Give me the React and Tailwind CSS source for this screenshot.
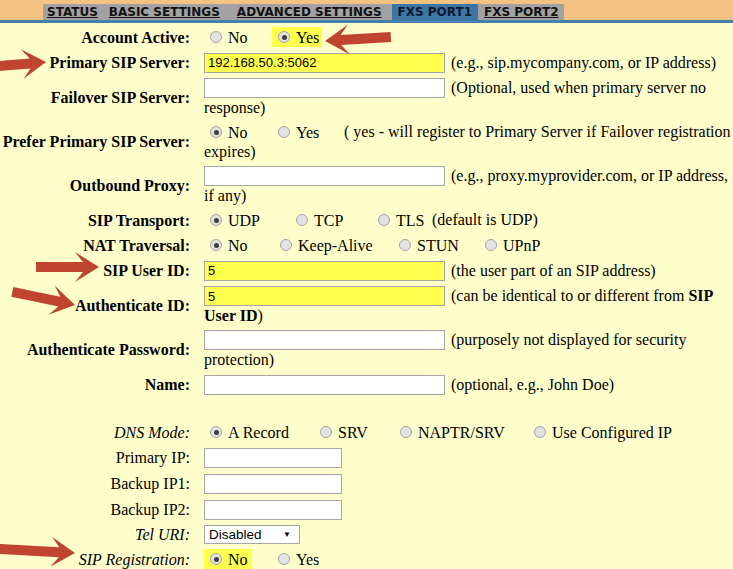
import React from 'react';

const serif = "font-['Liberation_Serif','Times_New_Roman',serif]";
const sans = "font-['Liberation_Sans',Arial,sans-serif]";

const Radio = ({ checked, label, w = '', ml = '', hl = false }) => (
  <span className={`inline-flex items-center align-top h-[20px] pl-[6px] ${w} ${ml} ${hl ? 'bg-[#ffff4d]' : ''}`}>
    <span className="w-[12px] h-[12px] rounded-full border border-[#a4a4a4] bg-[#e3e3e3] flex items-center justify-center mr-[6px] shrink-0">
      {checked && <span className="w-[5px] h-[5px] rounded-full bg-[#3d3d3d]" />}
    </span>
    <span className="whitespace-nowrap">{label}</span>
  </span>
);

const TextBox = ({ value = '', yellow = false, w = 'w-[241px]' }) => (
  <input
    readOnly
    defaultValue={value}
    className={`align-top h-[20px] ${w} mr-[6px] border border-[#a6a6a6] px-[3px] text-[13px] leading-[18px] text-black ${sans} ${yellow ? 'bg-[#ffff4d]' : 'bg-white'}`}
  />
);

const Row = ({ label, kind = 'bold', minH = 'min-h-[21px]', children }) => {
  const labelCls = kind === 'bold' ? 'font-bold' : kind === 'italic' ? 'italic' : '';
  return (
    <div className={`flex items-center ${minH}`}>
      <div className={`w-[190px] text-right shrink-0 whitespace-nowrap ${labelCls}`}>{label}</div>
      <div className="ml-[14px] w-[529px]">{children}</div>
    </div>
  );
};

const Arrow = ({ x, y, angle, len }) => {
  const H = 24, B = 15, J = 16, S = 5;
  const pts = `0,0 ${H},${-B} ${J},${-S} ${len},${-S} ${len},${S} ${J},${S} ${H},${B}`;
  return <polygon points={pts} fill="#c0452f" transform={`translate(${x} ${y}) rotate(${angle})`} />;
};

export default function App() {
  return (
    <div className={`relative w-[733px] h-[569px] overflow-hidden bg-[#ffffcc] text-black text-[16px] leading-[19px] ${serif}`}>
      {/* tab bar */}
      <div className="h-[20px] bg-[#f4c383] flex items-end">
        <div className="ml-[43px] h-[16px] bg-[#a2a2a2] flex items-stretch font-['DejaVu_Sans',Verdana,sans-serif] font-bold text-[12px] text-[#111] leading-[16px]">
          <span className="pl-[4px] underline">STATUS</span>
          <span className="ml-[11px] underline">BASIC SETTINGS</span>
          <span className="ml-[17px] underline">ADVANCED SETTINGS</span>
          <span className="ml-[10px] px-[6px] bg-[#3d75a6] text-[#0d1a2b]">FXS PORT1</span>
          <span className="ml-[6px] pr-[5px] underline">FXS PORT2</span>
        </div>
      </div>
      <div className="h-[3px] bg-[#4282a9]" />

      <div className="pt-[4px] flex flex-col gap-[5px]">
        <Row label="Account Active:" minH="min-h-[20px]">
          <Radio label="No" w="w-[68px]" />
          <Radio label="Yes" checked w="w-[50px]" hl />
        </Row>
        <Row label="Primary SIP Server:">
          <TextBox value="192.168.50.3:5062" yellow />
          (e.g., sip.mycompany.com, or IP address)
        </Row>
        <Row label="Failover SIP Server:">
          <TextBox />
          (Optional, used when primary server no response)
        </Row>
        <Row label="Prefer Primary SIP Server:">
          <Radio label="No" checked w="w-[68px]" />
          <Radio label="Yes" w="w-[72px]" />
          ( yes - will register to Primary Server if Failover registration expires)
        </Row>
        <Row label="Outbound Proxy:">
          <TextBox />
          (e.g., proxy.myprovider.com, or IP address, if any)
        </Row>
        <Row label="SIP Transport:" minH="min-h-[20px]">
          <Radio label="UDP" checked w="w-[86px]" />
          <Radio label="TCP" w="w-[82px]" />
          <Radio label="TLS" w="w-[60px]" />
          (default is UDP)
        </Row>
        <Row label="NAT Traversal:" minH="min-h-[20px]">
          <Radio label="No" checked w="w-[70px]" />
          <Radio label="Keep-Alive" w="w-[119px]" />
          <Radio label="STUN" w="w-[86px]" />
          <Radio label="UPnP" />
        </Row>
        <Row label="SIP User ID:">
          <TextBox value="5" yellow />
          (the user part of an SIP address)
        </Row>
        <Row label="Authenticate ID:">
          <TextBox value="5" yellow />
          (can be identical to or different from <b>SIP User ID</b>)
        </Row>
        <Row label="Authenticate Password:">
          <TextBox />
          (purposely not displayed for security protection)
        </Row>
        <Row label="Name:">
          <TextBox />
          (optional, e.g., John Doe)
        </Row>
        <div className="h-[17px]" />
        <Row label="DNS Mode:" kind="italic" minH="min-h-[20px]">
          <Radio label="A Record" checked w="w-[110px]" />
          <Radio label="SRV" w="w-[80px]" />
          <Radio label="NAPTR/SRV" w="w-[134px]" />
          <Radio label="Use Configured IP" />
        </Row>
        <Row label="Primary IP:" kind="normal">
          <TextBox w="w-[138px]" />
        </Row>
        <Row label="Backup IP1:" kind="normal">
          <TextBox w="w-[138px]" />
        </Row>
        <Row label="Backup IP2:" kind="normal">
          <TextBox w="w-[138px]" />
        </Row>
        <Row label="Tel URI:" kind="italic" minH="min-h-[18px]">
          <span className={`inline-flex items-center justify-between align-top w-[96px] h-[19px] border border-[#a6a6a6] bg-white pl-[4px] pr-[8px] text-[13.5px] ${sans}`}>
            <span>Disabled</span>
            <span className="text-[8px]">▼</span>
          </span>
        </Row>
        <Row label="SIP Registration:" kind="italic" minH="min-h-[20px]">
          <Radio label="No" checked w="w-[48px]" hl />
          <Radio label="Yes" ml="ml-[20px]" />
        </Row>
      </div>

      {/* annotation arrows */}
      <svg className="absolute inset-0 pointer-events-none" width="733" height="569">
        <Arrow x={325} y={41} angle={-3.5} len={66} />
        <Arrow x={46} y={62} angle={175} len={52} />
        <Arrow x={99} y={267} angle={180} len={63} />
        <Arrow x={75} y={305} angle={191.8} len={64} />
        <Arrow x={75} y={553} angle={183} len={80} />
      </svg>
    </div>
  );
}
